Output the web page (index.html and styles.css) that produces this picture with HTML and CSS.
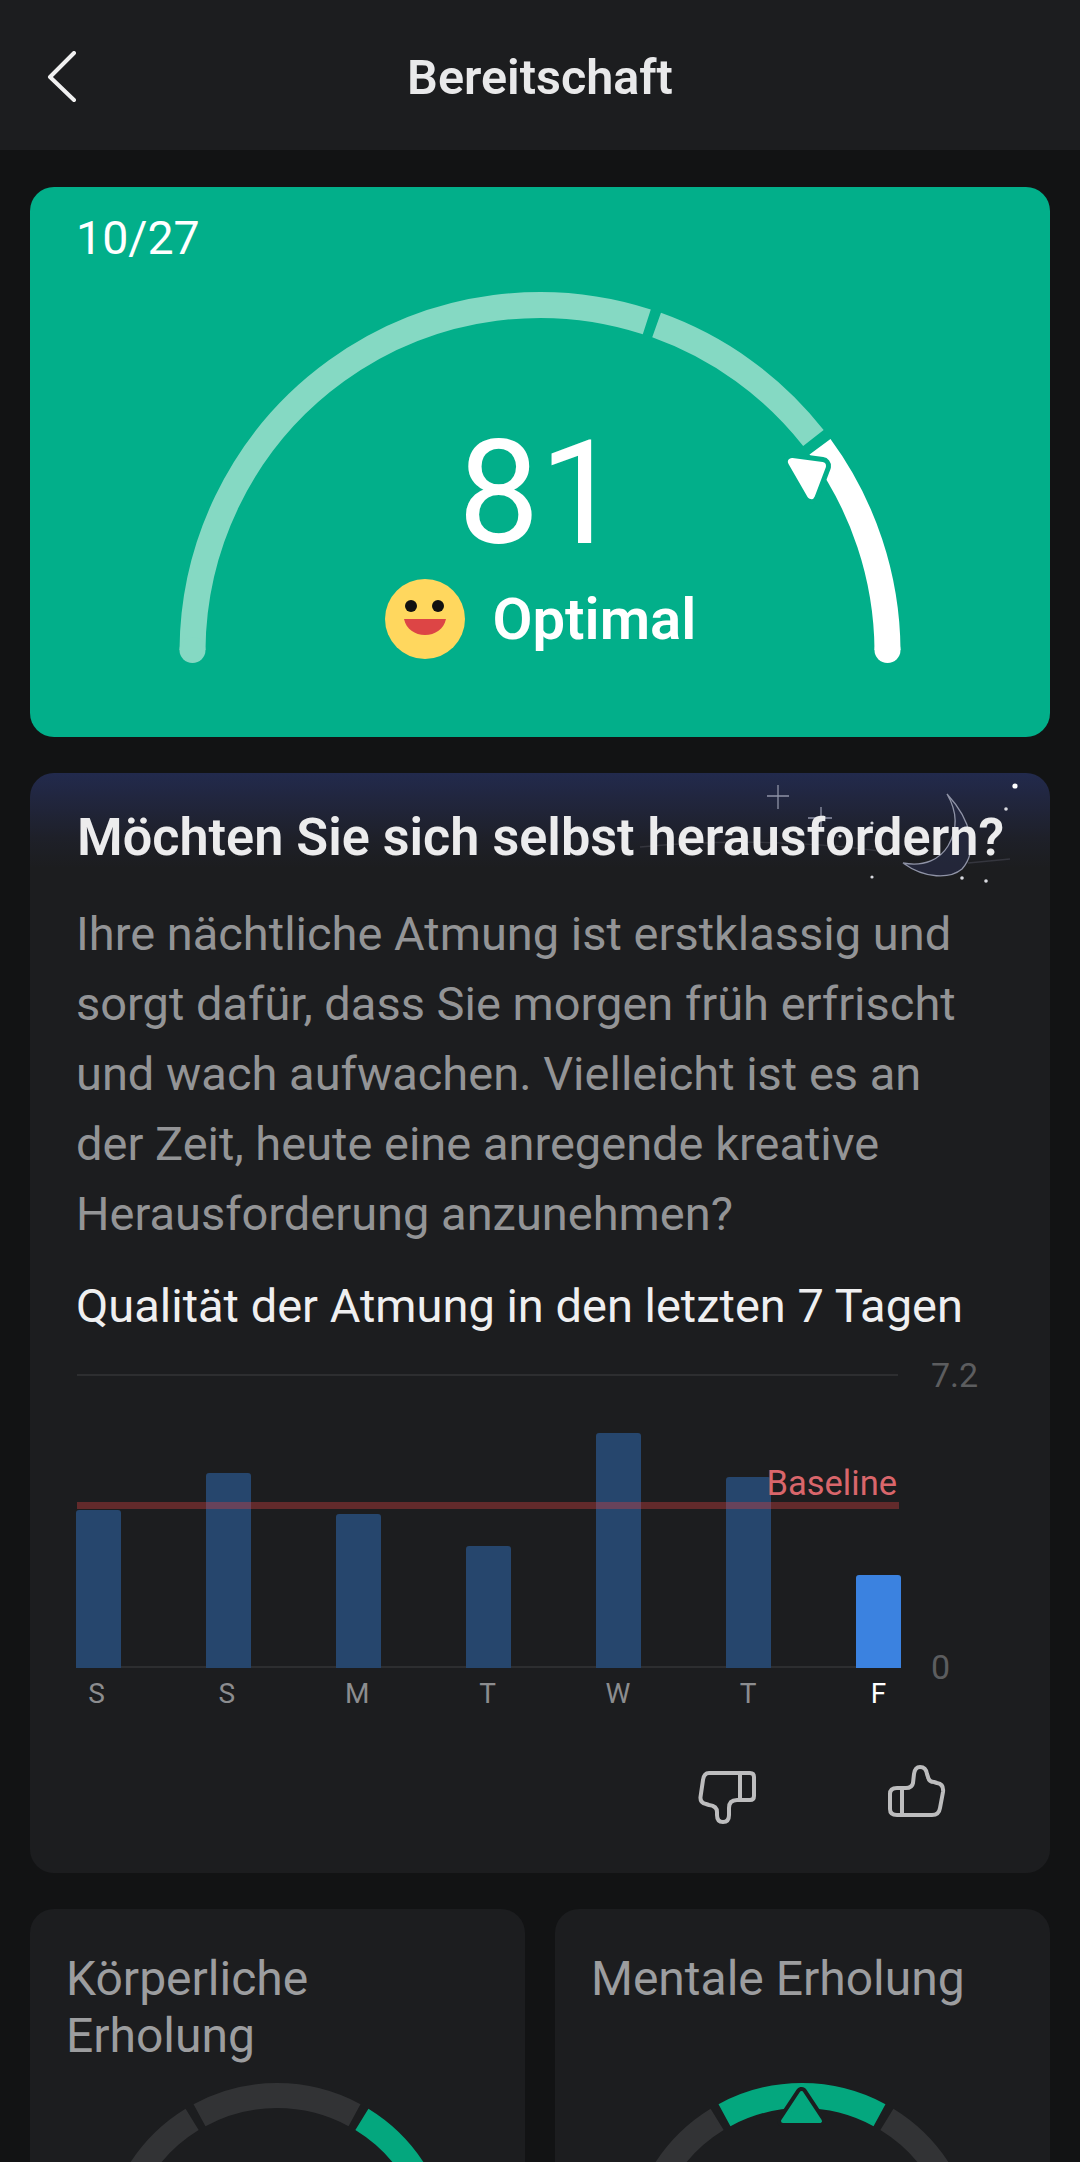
FILE: index.html
```html
<!DOCTYPE html>
<html lang="de">
<head>
<meta charset="utf-8">
<title>Bereitschaft</title>
<link rel="stylesheet" href="styles.css">
</head>
<body>
<header class="topbar">
  <svg class="back" viewBox="0 0 30 52" width="30" height="52"><path d="M27 2 3 26l24 23" fill="none" stroke="#f0f0f0" stroke-width="4" stroke-linecap="round" stroke-linejoin="round"/></svg>
  <h1 class="topbar-title">Bereitschaft</h1>
</header>
<main class="content">
  <section class="score-card">
    <div class="score-date">10/27</div>
    <div class="gauge">
      <svg class="gauge-svg" viewBox="170 285 740 385" width="740" height="385">
        <path d="M192.500 650A347.500 347.500 0 0 1 646.800 321.800" class="arc-soft"/>
        <path d="M656.600 325.100A347.500 347.500 0 0 1 813.400 438.100" class="arc-soft"/>
        <path d="M820 446.800A347.500 347.500 0 0 1 887.500 650" class="arc-white"/>
        <circle cx="192.500" cy="650" r="13" class="cap-soft"/>
        <circle cx="887.500" cy="650" r="13" class="cap-white"/>
        <path d="M792 462 822 466 811 495Z" class="pointer-halo"/>
        <path d="M792 462 822 466 811 495Z" class="pointer"/>
      </svg>
      <div class="gauge-value">81</div>
      <div class="gauge-status">
        <svg class="emoji" viewBox="0 0 80 80" width="80" height="80">
          <circle cx="40" cy="40" r="40" fill="#ffd75e"/>
          <circle cx="26" cy="27" r="6" fill="#111"/>
          <circle cx="53" cy="27" r="6" fill="#111"/>
          <path d="M19 40H61C59 50 50 56 40 56S21 50 19 40Z" fill="#dd4545"/>
        </svg>
        <span class="status-text">Optimal</span>
      </div>
    </div>
  </section>

  <section class="advice-card">
    <svg class="night" viewBox="0 0 1020 130" width="1020" height="130">
      <g transform="translate(-30 -772)" fill="none" stroke="#8f93a6" stroke-width="1.3">
        <path d="M778 784V808M767 795H789"/>
        <path d="M821 806V830M808 817H832"/>
        <path d="M947 793C972 820 978 850 962 868C950 878 925 878 903 862C925 866 940 858 948 845C958 828 957 810 947 793Z" fill="#262b45" fill-opacity=".7"/>
        <path d="M640 846C700 840 790 838 880 850M968 862 1010 858" stroke="#35363e"/>
      </g>
      <g transform="translate(-30 -772)" fill="#d9dae0">
        <circle cx="1015" cy="785" r="2.600" fill="#fff"/>
        <circle cx="1006" cy="808" r="1.800"/>
        <circle cx="872" cy="822" r="1.600"/>
        <circle cx="840" cy="835" r="1.600"/>
        <circle cx="872" cy="876" r="1.600"/>
        <circle cx="962" cy="877" r="1.800"/>
        <circle cx="986" cy="880" r="1.800"/>
      </g>
    </svg>
    <h2 class="advice-title">Möchten Sie sich selbst herausfordern?</h2>
    <p class="advice-text">Ihre nächtliche Atmung ist erstklassig und sorgt dafür, dass Sie morgen früh erfrischt und wach aufwachen. Vielleicht ist es an der Zeit, heute eine anregende kreative Herausforderung anzunehmen?</p>
    <h3 class="chart-title">Qualität der Atmung in den letzten 7 Tagen</h3>
    <div class="chart">
      <div class="plot">
        <div class="bars">
          <div class="bar" style="height:158px"></div>
          <div class="bar" style="height:195px"></div>
          <div class="bar" style="height:154px"></div>
          <div class="bar" style="height:122px"></div>
          <div class="bar" style="height:235px"></div>
          <div class="bar" style="height:191px"></div>
          <div class="bar bar-now" style="height:93px"></div>
        </div>
        <div class="baseline"></div>
        <div class="baseline-label">Baseline</div>
        <div class="axis-max">7.2</div>
        <div class="axis-min">0</div>
      </div>
      <div class="days">
        <span>S</span><span>S</span><span>M</span><span>T</span><span>W</span><span>T</span><span class="day-now">F</span>
      </div>
    </div>
    <div class="feedback">
      <svg viewBox="0 0 60 56" width="60" height="56" class="thumb">
        <path d="M10 3H51Q55 3 55 7V26Q55 30 51 30H38Q30 30 30 38V45Q30 52 24 52Q18 52 18 45V42Q18 36 10 35L7 34Q1 33 1.500 27L4 10Q5 3 10 3ZM41 3V30"/>
      </svg>
      <svg viewBox="0 0 60 56" width="60" height="56" class="thumb thumb-up">
        <path d="M16 24H19Q25 24 26 19L27 10Q28 3 33 3Q39 3 40 10L41 13Q42 18 47 18L50 19Q57 20 56 28L53 44Q52 51 45 51H10Q3 51 3 45V30Q3 24 10 24H16ZM15 24V51"/>
      </svg>
    </div>
  </section>

  <div class="recovery-grid">
    <section class="recovery-card">
      <h3 class="recovery-title">Körperliche Erholung</h3>
      <svg class="ring" viewBox="0 0 350 350" width="350" height="350">
        <path d="M12.500 175A162.500 162.500 0 0 1 90.100 36.400" class="ring-grey"/>
        <path d="M97.500 32.200A162.500 162.500 0 0 1 252.500 32.200" class="ring-grey"/>
        <path d="M259.900 36.400A162.500 162.500 0 0 1 337.500 175" class="ring-green"/>
      </svg>
    </section>
    <section class="recovery-card">
      <h3 class="recovery-title">Mentale Erholung</h3>
      <svg class="ring" viewBox="0 0 350 350" width="350" height="350">
        <path d="M12.500 175A162.500 162.500 0 0 1 90.100 36.400" class="ring-grey"/>
        <path d="M97.500 32.200A162.500 162.500 0 0 1 252.500 32.200" class="ring-green"/>
        <path d="M259.900 36.400A162.500 162.500 0 0 1 337.500 175" class="ring-grey"/>
        <path d="M174.500 10 193 38H156Z" class="ring-marker-halo"/>
        <path d="M174.500 10 193 38H156Z" class="ring-marker"/>
      </svg>
    </section>
  </div>
</main>
</body>
</html>
```
FILE: styles.css
```css
* { box-sizing: border-box; }
html, body { margin: 0; padding: 0; }
html { overflow: hidden; }
body {
  width: 1080px;
  height: 2162px;
  overflow: hidden;
  background: #121314;
  font-family: Roboto, "Liberation Sans", sans-serif;
  color: #fff;
}
.topbar {
  position: relative;
  height: 150px;
  background: #1c1d1f;
  display: flex;
  align-items: center;
  justify-content: center;
}
.back { position: absolute; left: 47px; top: 51px; }
.topbar-title {
  margin: 0;
  font-size: 48.500px;
  font-weight: 600;
  line-height: 52px;
  color: #e9e9ea;
  transform: translateY(3px);
}
.content {
  padding: 37px 30px 0;
  display: flex;
  flex-direction: column;
  gap: 36px;
}
.score-card {
  height: 550px;
  background: #02af8a;
  border-radius: 24px;
  padding: 26px 47px 0 46px;
}
.score-date {
  font-size: 46.500px;
  line-height: 50px;
  font-weight: 400;
  color: #fff;
}
.gauge {
  position: relative;
  width: 740px;
  height: 385px;
  margin: 22px auto 0;
}
.gauge-svg { display: block; }
.arc-soft, .arc-white { fill: none; stroke-width: 26; }
.arc-soft { stroke: #85d9c3; }
.arc-white { stroke: #fff; }
.cap-soft { fill: #85d9c3; }
.cap-white { fill: #fff; }
.pointer-halo {
  fill: #02af8a;
  stroke: #02af8a;
  stroke-width: 18;
  stroke-linejoin: round;
}
.pointer {
  fill: #fff;
  stroke: #fff;
  stroke-width: 8;
  stroke-linejoin: round;
}
.gauge-value {
  position: absolute;
  left: 0;
  right: 0;
  top: 123px;
  text-align: center;
  font-size: 145px;
  line-height: 170px;
  font-weight: 400;
}
.gauge-status {
  position: absolute;
  left: 215px;
  top: 294px;
  display: flex;
  align-items: center;
  gap: 28px;
}
.emoji { display: block; }
.status-text {
  font-size: 58px;
  line-height: 70px;
  font-weight: 600;
}
.advice-card {
  position: relative;
  height: 1100px;
  border-radius: 24px;
  background: linear-gradient(180deg, #222a4d 0, #21263f 25px, #1e2029 65px, #1c1d1f 95px);
  padding: 40px 46px 0;
  overflow: hidden;
}
.night { position: absolute; left: 0; top: 0; }
.advice-title {
  position: relative;
  margin: 0 0 0 1px;
  font-size: 52.200px;
  line-height: 50px;
  font-weight: 600;
  color: #ececed;
  white-space: nowrap;
}
.advice-text {
  margin: 36px 0 0;
  width: 900px;
  font-size: 47px;
  line-height: 70px;
  color: #939496;
  font-weight: 400;
}
.chart-title {
  margin: 22px 0 0;
  font-size: 47px;
  line-height: 70px;
  font-weight: 400;
  color: #efeff0;
  white-space: nowrap;
}
.chart { margin: 33px 0 0; width: 825px; }
.plot {
  position: relative;
  height: 294px;
  border-bottom: 2px solid #2d2e30;
}
.plot::before {
  content: "";
  position: absolute;
  left: 1px;
  right: 3px;
  top: 0;
  height: 2px;
  background: #2d2e30;
}
.bars {
  position: absolute;
  left: 0;
  right: 0;
  bottom: -2px;
  display: flex;
  justify-content: space-between;
  align-items: flex-end;
}
.bar {
  width: 45px;
  background: #26466d;
  border-radius: 3px 3px 0 0;
}
.bar-now { background: #3b82e0; }
.baseline {
  position: absolute;
  left: 1px;
  right: 2px;
  top: 128px;
  height: 7px;
  background: rgba(214, 64, 64, .38);
}
.baseline-label {
  position: absolute;
  right: 4px;
  top: 89px;
  font-size: 34.500px;
  line-height: 40px;
  color: #d9666b;
}
.axis-max, .axis-min {
  position: absolute;
  left: 855px;
  font-size: 34px;
  line-height: 40px;
  color: #5c5d5f;
  white-space: nowrap;
}
.axis-max { top: -19px; }
.axis-min { bottom: -21px; }
.days {
  display: flex;
  justify-content: space-between;
  margin-left: -2px;
  padding: 10px 0 0;
  font-size: 28px;
  line-height: 32px;
  color: #8c8d8f;
}
.days span { width: 45px; text-align: center; }
.days .day-now { color: #fff; }
.feedback {
  display: flex;
  justify-content: flex-end;
  gap: 128px;
  margin: 55px 0 0;
  padding-right: 57px;
}
.thumb { display: block; overflow: visible; transform: translateY(5px); }
.thumb-up { transform: translateY(-1px); }
.thumb path {
  fill: none;
  stroke: #bdbdbe;
  stroke-width: 4;
  stroke-linejoin: round;
}
.recovery-grid {
  display: grid;
  grid-template-columns: 495px 495px;
  justify-content: space-between;
}
.recovery-card {
  height: 420px;
  background: #1c1d1f;
  border-radius: 24px;
  padding: 41px 36px 0;
  overflow: hidden;
}
.recovery-title {
  margin: 0;
  height: 114px;
  font-size: 48px;
  line-height: 57px;
  font-weight: 400;
  color: #9c9d9f;
}
.ring {
  display: block;
  margin: 19px auto 0;
  overflow: visible;
  transform: translateX(-1px);
}
.ring-grey, .ring-green { fill: none; stroke-width: 25; }
.ring-grey { stroke: #323335; }
.ring-green { stroke: #04a77e; }
.ring-marker-halo {
  fill: #1c1d1f;
  stroke: #1c1d1f;
  stroke-width: 12;
  stroke-linejoin: round;
}
.ring-marker {
  fill: #04a77e;
  stroke: #04a77e;
  stroke-width: 4;
  stroke-linejoin: round;
}
```
